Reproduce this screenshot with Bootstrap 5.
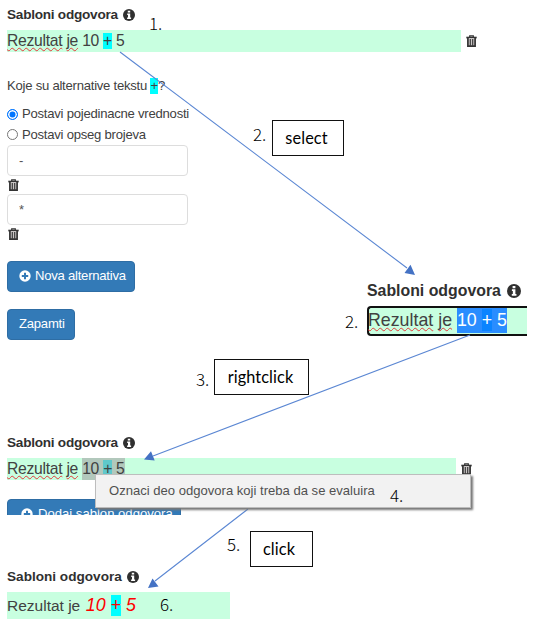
<!DOCTYPE html>
<html lang="sr-Latn">
<head>
<meta charset="utf-8">
<meta name="viewport" content="width=device-width, initial-scale=1">
<title>Sabloni odgovora</title>
<link href="https://cdn.jsdelivr.net/npm/bootstrap@5.3.0/dist/css/bootstrap.min.css" rel="stylesheet">
<style>
body{font-family:"Liberation Sans",Arial,sans-serif;font-size:13.1px;letter-spacing:-.24px;line-height:20px;color:#414141;background:#fff}
.board{width:553px;height:622px}
.flowcol{padding-left:7px}
svg{flex:none;display:block}
.ttl{font-weight:700;color:#303030;font-size:13.6px;letter-spacing:-.25px;height:20px;gap:5px;white-space:nowrap}
.answer{background:#c8ffe0;font-size:15.7px;letter-spacing:-.28px;height:22px;line-height:21px;white-space:pre}
.typo{text-decoration:underline wavy #e33a3a 1px;text-underline-offset:1px;text-decoration-skip-ink:none}
.op{background:#0ff;display:inline-block;line-height:16px}
.step-one{padding-top:5px;height:433px}
.step-three{height:134px}
.question{margin-top:24px;height:20px}
.choice{height:20px;gap:4px;white-space:nowrap}
.choice + .choice{height:21px}
.choice .form-check-input{width:11px;height:11px;margin:0;border:1px solid #767676;background-image:none;flex:none}
.choice .form-check-input:checked{background:#0075ff;border:1px solid #0075ff;box-shadow:inset 0 0 0 1.5px #fff}
.form-control.alt{width:181px;height:31px;font-size:13px;padding:0 11px;border:1.4px solid #ddd;border-radius:4px;color:#555}
.bin{height:18px;padding:3px 0 0 1px}
.btn.act{background:#337ab7;border:1px solid #2e6da4;color:#fff;font-size:13.1px;letter-spacing:-.24px;line-height:18px;border-radius:4px;height:31px;padding:0 0 2px 11px;text-align:left}
.cut{height:16px}
.cut .btn.act{letter-spacing:0;padding-left:13px}
.zoomed{left:367px;top:281px;width:160px}
.zoomed .ttl{font-size:15.87px;letter-spacing:0;gap:6px}
.zoomed .answer{font-size:17.8px;letter-spacing:0;height:30px;line-height:25px;border:2px solid #111;border-right:0;border-radius:4px 0 0 4px;margin-top:5px;text-indent:-1px}
.picked{background:#2a8dff;color:#fff;display:inline-block;height:25px;text-indent:0}
.picked .op{background:#0a84ff;line-height:22px}
.greyed{background:#b2c8bc;display:inline-block;height:22px}
.greyed .op{background:#5fc8cb;line-height:18px}
.final .ttl{font-size:13.6px;letter-spacing:0}
.final .answer{width:223px;height:27px;line-height:27px;font-size:15.5px;letter-spacing:0;margin-top:5px}
.hot{color:#f00;font-style:italic;font-size:17.8px;margin-left:-3px}
.hot .op{line-height:21px}
.ctx{left:95px;top:474px;width:376px;height:34px;background:#f2f2f2;border:1px solid #bdbdbd;box-shadow:2px 2px 2px #777;padding-left:13px;font-size:13.07px;letter-spacing:0;line-height:32px;color:#505050;white-space:nowrap}
.note{border:1.5px solid #111;background:#fff;color:#000;font:16.3px/34px Lato,sans-serif;letter-spacing:.1px;text-align:center;height:36px}
.num{color:#000;font:300 17px/20px "Noto Sans CJK SC",sans-serif;letter-spacing:0}
</style>
<script src="https://cdn.jsdelivr.net/npm/bootstrap@5.3.0/dist/js/bootstrap.bundle.min.js"></script>
</head>
<body>
<svg width="0" height="0" class="position-absolute">
  <symbol id="info" viewBox="0 0 12 12"><circle cx="6" cy="6" r="6" fill="#303030"/><path d="M4.8 1.700h2.400v1.900H4.800zM4.200 4.600h3v4h.9v1.400H4.100V8.600h.9V5.900h-.8z" fill="#fff"/></symbol>
  <symbol id="trash" viewBox="0 0 11 12"><path d="M3.700 2V.8h3.600V2" fill="none" stroke="#333" stroke-width="1.200"/><path d="M.3 1.700h10.400v1.700H.3z" fill="#333"/><path d="M1.900 3v8.200h7.200V3" fill="#c9c5c5" stroke="#333" stroke-width="1.700"/><path d="M4.300 4v6.700M6.700 4v6.700" stroke="#333" stroke-width="1.100"/></symbol>
  <symbol id="plus" viewBox="0 0 12 12"><circle cx="6" cy="6" r="5.700" fill="#fff"/><path d="M6 2.800v6.400M2.800 6h6.400" stroke="#337ab7" stroke-width="2"/></symbol>
</svg>
<main class="board position-relative overflow-hidden">
  <div class="flowcol d-flex flex-column">
    <section class="step-one">
      <div class="ttl d-flex align-items-center">Sabloni odgovora <svg width="12" height="12"><use href="#info"/></svg></div>
      <div class="d-flex align-items-center mt-1" style="gap:5px"><div class="answer" style="width:454px;margin-top:1px"><span class="typo">Rezultat</span> <span class="typo">je</span> 10 <span class="op">+</span> 5</div><svg width="11" height="12"><use href="#trash"/></svg></div>
      <div class="question">Koje su alternative tekstu <span class="op">+</span>?</div>
      <div class="choice d-flex align-items-center mt-2"><input class="form-check-input" type="radio" name="mode" id="r1" checked><label for="r1">Postavi pojedinacne vrednosti</label></div>
      <div class="choice d-flex align-items-center"><input class="form-check-input" type="radio" name="mode" id="r2"><label for="r2">Postavi opseg brojeva</label></div>
      <input class="form-control alt" value="-" aria-label="Alternativa 1">
      <div class="bin"><svg width="11" height="12"><use href="#trash"/></svg></div>
      <input class="form-control alt" value="*" aria-label="Alternativa 2">
      <div class="bin"><svg width="11" height="12"><use href="#trash"/></svg></div>
      <button class="btn act d-flex align-items-center mb-3" style="width:128px;margin-top:18px;gap:4px"><svg width="12" height="12"><use href="#plus"/></svg>Nova alternativa</button>
      <button class="btn act" style="width:68px;margin-top:1px">Zapamti</button>
    </section>
    <section class="step-three">
      <div class="ttl d-flex align-items-center">Sabloni odgovora <svg width="12" height="12"><use href="#info"/></svg></div>
      <div class="d-flex align-items-center mt-1" style="gap:5px"><div class="answer" style="width:449px;margin-top:1px"><span class="typo">Rezultat</span> <span class="typo">je</span> <span class="greyed">10 <span class="op">+</span> 5</span></div><svg width="11" height="12"><use href="#trash"/></svg></div>
      <div class="cut overflow-hidden" style="margin-top:19px"><button class="btn act d-flex align-items-center" style="width:174px;gap:5px"><svg width="12" height="12"><use href="#plus"/></svg>Dodaj sablon odgovora</button></div>
    </section>
    <section class="final">
      <div class="ttl d-flex align-items-center">Sabloni odgovora <svg width="12" height="12"><use href="#info"/></svg></div>
      <div class="answer"><span>Rezultat je </span> <span class="hot">10 <span class="op">+</span> 5</span></div>
    </section>
  </div>

  <section class="zoomed position-absolute">
    <div class="ttl d-flex align-items-center">Sabloni odgovora <svg width="14" height="14"><use href="#info"/></svg></div>
    <div class="answer"><span class="typo">Rezultat</span> <span class="typo">je</span> <span class="picked">10 <span class="op">+</span> 5</span></div>
  </section>

  <svg class="position-absolute top-0 start-0 pe-none" width="553" height="622" fill="none" stroke="#5b87d3" stroke-width="1.100">
    <path d="M120 52 407 268M470 335 153 456M248 509 155 581"/>
    <path d="M415 275 404.500 273 410.500 264.800zM144 459.500 151 451.300 154.700 460.600zM148 588 152.500 578.500 158.500 586.500z" fill="#4472c4" stroke="none"/>
  </svg>
  <div class="ctx position-absolute">Oznaci deo odgovora koji treba da se evaluira</div>

  <div class="note position-absolute" style="left:272px;top:120px;width:72px;padding-right:3px">select</div>
  <div class="note position-absolute" style="left:214px;top:359px;width:95px;padding-right:2px">rightclick</div>
  <div class="note position-absolute" style="left:250px;top:531px;width:63px;padding-right:5px">click</div>
  <span class="num position-absolute" style="left:149px;top:13px">1.</span>
  <span class="num position-absolute" style="left:253px;top:124px">2.</span>
  <span class="num position-absolute" style="left:345px;top:311px">2.</span>
  <span class="num position-absolute" style="left:196px;top:369px">3.</span>
  <span class="num position-absolute" style="left:390px;top:485px">4.</span>
  <span class="num position-absolute" style="left:227px;top:534px">5.</span>
  <span class="num position-absolute" style="left:160px;top:594px">6.</span>
</main>
</body>
</html>
